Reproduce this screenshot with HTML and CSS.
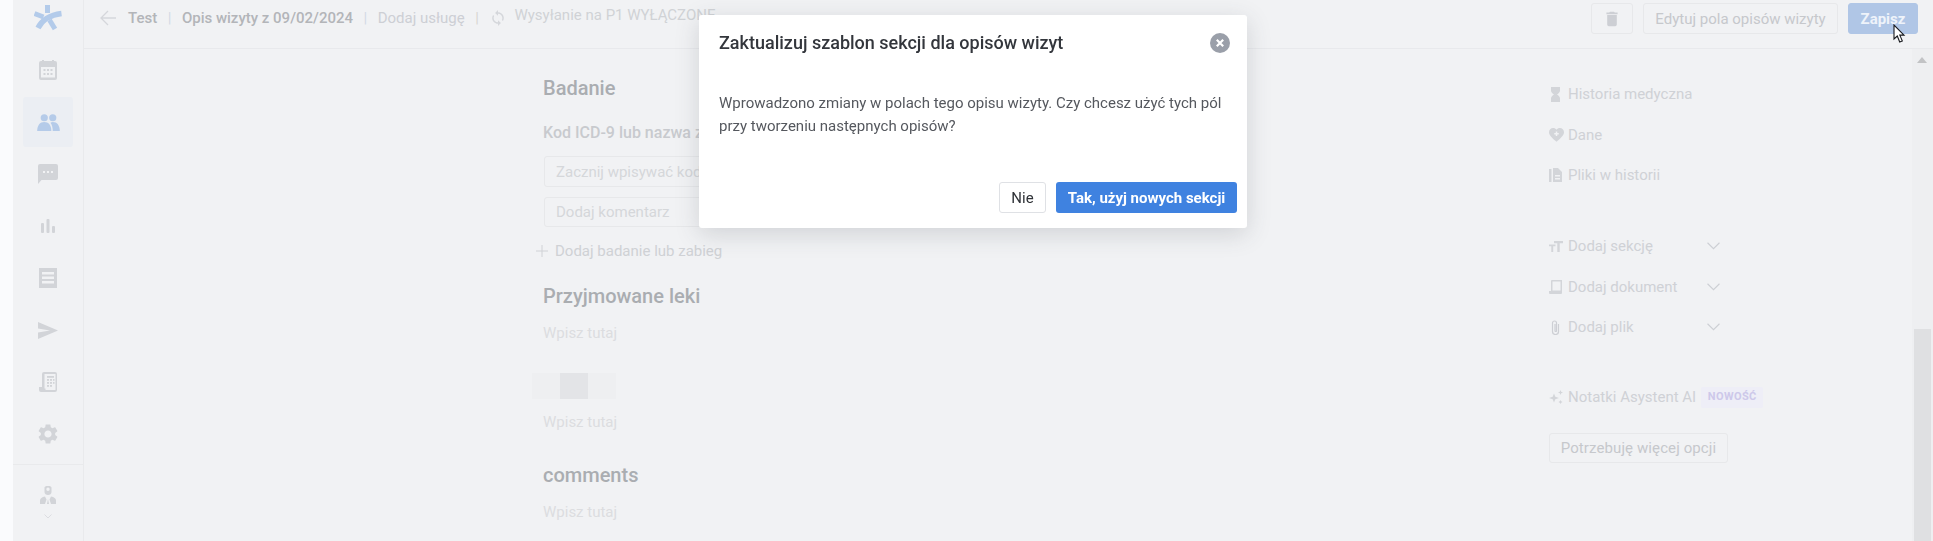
FILE: index.html
```html
<!DOCTYPE html>
<html lang="pl">
<head>
<meta charset="utf-8">
<title>Opis wizyty</title>
<link rel="stylesheet" href="styles.css">
</head>
<body>
<div class="app">
  <div class="strip"></div>
  <aside class="sidebar">
    <div class="logo">
      <svg width="28" height="26" viewBox="0 0 28 26"><g fill="none" stroke="#b3cbea"><path d="M13.500 0v8" stroke-width="5"/><path d="M.5 8.500l9 3.500" stroke-width="5"/><path d="M4 23C8 15 16 10 27.500 8.500" stroke-width="5.500"/><path d="M15.500 15l5.500 9" stroke-width="5"/></g></svg>
    </div>
    <nav class="nav">
      <div class="nav-item"><svg width="20" height="20" viewBox="0 0 20 20"><path class="ic" fill-rule="evenodd" d="M3 1h1V0h2v1h8V0h2v1h1a2 2 0 0 1 2 2v15a2 2 0 0 1-2 2H3a2 2 0 0 1-2-2V3a2 2 0 0 1 2-2zM3 7v10.500h14V7z"/><g class="ic"><rect x="5.500" y="9" width="2" height="2"/><rect x="9" y="9" width="2" height="2"/><rect x="12.500" y="9" width="2" height="2"/><rect x="5.500" y="13" width="2" height="2"/><rect x="9" y="13" width="2" height="2"/><rect x="12.500" y="13" width="2" height="2"/></g></svg></div>
      <div class="nav-item active"><svg width="23" height="17" viewBox="0 0 24 18"><g fill="#b5cbe9"><circle cx="7.500" cy="4" r="3.800"/><circle cx="16.500" cy="4" r="3.800"/><path d="M0 18c0-6 3-9.500 7.500-9.500S15 12 15 18z"/><path d="M16.500 18c0-3.500-.7-6.700-2.400-8.800.7-.4 1.500-.7 2.400-.7 4.500 0 7.500 3.500 7.500 9.500z"/></g></svg></div>
      <div class="nav-item"><svg width="20" height="20" viewBox="0 0 20 20"><path class="ic" d="M2 0h16a2 2 0 0 1 2 2v12a2 2 0 0 1-2 2H3.500L0 20V2a2 2 0 0 1 2-2z"/><g fill="#f1f2f4"><rect x="5" y="7" width="2" height="2"/><rect x="9" y="7" width="2" height="2"/><rect x="13" y="7" width="2" height="2"/></g></svg></div>
      <div class="nav-item"><svg width="14" height="14" viewBox="0 0 14 14"><g class="ic"><rect y="4" width="3" height="10" rx="1"/><rect x="5.500" width="3" height="14" rx="1"/><rect x="11" y="7" width="3" height="7" rx="1"/></g></svg></div>
      <div class="nav-item"><svg width="18" height="20" viewBox="0 0 18 20"><path class="ic" d="M0 0h18v20H0z"/><g fill="#f1f2f4"><rect x="3" y="4" width="12" height="2.500"/><rect x="3" y="8.500" width="12" height="2.500"/><rect x="3" y="13" width="12" height="2.500"/></g></svg></div>
      <div class="nav-item"><svg width="20" height="17" viewBox="0 0 20 17"><path class="ic" d="M0 0l20 8.500L0 17v-6.500l12-2L0 6.500z"/></svg></div>
      <div class="nav-item"><svg width="18" height="20" viewBox="0 0 18 20"><path class="ic" fill-rule="evenodd" d="M5 0h11a2 2 0 0 1 2 2v16a2 2 0 0 1-2 2H2a2 2 0 0 1-2-2v-3h3V2a2 2 0 0 1 2-2zM5.500 2v14.500h1v1.500h9.500a.500.500 0 0 0 .500-.500V2z"/><g class="ic"><rect x="8" y="4" width="7" height="1.800"/><rect x="8" y="7" width="2" height="1.800"/><rect x="11" y="7" width="2" height="1.800"/><rect x="14" y="7" width="1.500" height="1.800"/><rect x="8" y="10" width="2" height="1.800"/><rect x="11" y="10" width="2" height="1.800"/><rect x="14" y="10" width="1.500" height="1.800"/><rect x="8" y="13" width="2" height="1.800"/><rect x="11" y="13" width="2" height="1.800"/></g></svg></div>
      <div class="nav-item"><svg width="24" height="24" viewBox="0 0 24 24"><path class="ic" d="M19.140 12.940c.04-.3.06-.61.06-.94 0-.32-.02-.64-.07-.94l2.030-1.580c.18-.14.23-.41.12-.61l-1.920-3.320c-.12-.22-.37-.29-.59-.22l-2.390.96c-.5-.38-1.030-.7-1.620-.94l-.36-2.540c-.04-.24-.24-.41-.48-.41h-3.840c-.24 0-.43.17-.47.41l-.36 2.540c-.59.24-1.130.57-1.620.94l-2.390-.96c-.22-.08-.47 0-.59.22L2.740 8.870c-.12.21-.08.47.12.61l2.030 1.580c-.05.3-.09.63-.09.94s.02.64.07.94l-2.030 1.580c-.18.14-.23.41-.12.61l1.920 3.320c.12.22.37.29.59.22l2.390-.96c.5.38 1.030.7 1.620.94l.36 2.540c.05.24.24.41.48.41h3.840c.24 0 .44-.17.47-.41l.36-2.540c.59-.24 1.130-.56 1.620-.94l2.390.96c.22.08.47 0 .59-.22l1.920-3.320c.12-.22.07-.47-.12-.61l-2.010-1.580zM12 15.600c-1.980 0-3.600-1.620-3.600-3.600s1.620-3.600 3.600-3.600 3.600 1.620 3.600 3.600-1.620 3.600-3.600 3.600z"/></svg></div>
    </nav>
    <div class="user">
      <svg width="16" height="18" viewBox="0 0 16 18"><path class="ic" fill-rule="evenodd" d="M4.500 1.500C4.500.6 5.500 0 8 0s3.500.6 3.500 1.500V6c0 1.800-1.500 3-3.500 3S4.500 7.800 4.500 6zM6.300 3.200a1.700 1.700 0 1 0 3.400 0 1.700 1.700 0 0 0-3.400 0z"/><path class="ic" d="M0 18v-3.500C0 12.500 2 11 5 10.500l1.500 3-1.500 4.500zM16 18v-3.500c0-2-2-3.500-5-4l-1.500 3L11 18zM7 18l1-5 1 5z"/></svg>
      <svg width="8" height="5" viewBox="0 0 8 5"><path d="M.5.500L4 4 7.500.500" fill="none" stroke="#dcdde1" stroke-width="1"/></svg>
    </div>
  </aside>
  <div class="main">
    <header class="topbar">
      <svg class="back" width="16" height="16" viewBox="0 0 16 16"><path d="M8 1L1 8l7 7M1 8h15" fill="none" stroke="#d5d7db" stroke-width="1.300"/></svg>
      <span class="crumb strong">Test</span>
      <span class="sep">|</span>
      <span class="crumb strong">Opis wizyty z 09/02/2024</span>
      <span class="sep">|</span>
      <span class="crumb">Dodaj usługę</span>
      <span class="sep tan">|</span>
      <svg class="sync" width="14" height="16" viewBox="4 1 16 22"><path fill="#d5d7db" d="M12 4V1L8 5l4 4V6c3.310 0 6 2.690 6 6 0 1.010-.25 1.970-.7 2.800l1.460 1.460C19.540 15.030 20 13.570 20 12c0-4.420-3.580-8-8-8zm0 14c-3.310 0-6-2.690-6-6 0-1.010.25-1.970.7-2.800L5.240 7.740C4.460 8.970 4 10.430 4 12c0 4.420 3.580 8 8 8v3l4-4-4-4v3z"/></svg>
      <span class="crumb raised">Wysyłanie na P1 WYŁĄCZONE</span>
      <div class="actions">
        <button class="btn icon-btn"><svg width="16" height="16" viewBox="3 2 18 20"><path fill="#cdcfd4" d="M6 19c0 1.100.9 2 2 2h8c1.100 0 2-.9 2-2V7H6v12zM19 4h-3.500l-1-1h-5l-1 1H5v2h14V4z"/></svg></button>
        <button class="btn edit-btn">Edytuj pola opisów wizyty</button>
        <button class="btn save-btn">Zapisz</button>
      </div>
    </header>
    <div class="body">
      <section class="content">
        <h2 class="title first">Badanie</h2>
        <div class="label">Kod ICD-9 lub nazwa zabiegu</div>
        <div class="input one">Zacznij wpisywać kod</div>
        <div class="input two">Dodaj komentarz</div>
        <div class="add"><svg width="12" height="12" viewBox="0 0 12 12"><path d="M6 0v12M0 6h12" stroke="#d0d2d6" stroke-width="1"/></svg>Dodaj badanie lub zabieg</div>
        <h2 class="title after-add">Przyjmowane leki</h2>
        <div class="hint">Wpisz tutaj</div>
        <div class="blocks"><i class="cell"></i><i class="cell dark"></i><i class="cell"></i></div>
        <div class="hint tight">Wpisz tutaj</div>
        <h2 class="title after-hint">comments</h2>
        <div class="hint">Wpisz tutaj</div>
      </section>
      <aside class="side">
        <div class="row"><i class="ico"><svg width="13" height="15" viewBox="5 2 14 20"><path class="sic" d="M6 2v5c0 2 2 3.500 4 5-2 1.500-4 3-4 5v5h12v-5c0-2-2-3.500-4-5 2-1.500 4-3 4-5V2z"/></svg></i><span>Historia medyczna</span></div>
        <div class="row"><i class="ico"><svg width="15" height="14" viewBox="2 3 20 18.500"><path class="sic" d="M12 21.350l-1.450-1.320C5.400 15.360 2 12.280 2 8.500 2 5.420 4.420 3 7.500 3c1.740 0 3.410.81 4.500 2.090C13.090 3.810 14.760 3 16.500 3 19.580 3 22 5.420 22 8.500c0 3.780-3.400 6.860-8.550 11.540z"/><path d="M12 7.500v6M9 10.500h6" stroke="#f1f2f4" stroke-width="2"/></svg></i><span>Dane</span></div>
        <div class="row"><i class="ico"><svg width="13" height="14" viewBox="0 0 13 14"><path class="sic" fill-rule="evenodd" d="M4 0h5l4 4v10H4zM6 7v1.500h5V7zM6 10v1.500h5V10z"/><rect class="sic" x="0" y="1" width="2.500" height="13"/></svg></i><span>Pliki w historii</span></div>
        <div class="row wide gap-top"><i class="ico"><svg width="14" height="11" viewBox="0 0 14 11"><path class="sic" d="M5 0h9v2.200h-3.300V11H8.300V2.200H5zM0 3.500h6.500v1.800H4.200V11H2.300V5.300H0z"/></svg></i><span>Dodaj sekcję</span><svg class="chev" width="13" height="8" viewBox="0 0 12 7"><path d="M.5.500L6 6 11.500.500" fill="none" stroke="#cdcfd4" stroke-width="1"/></svg></div>
        <div class="row wide"><i class="ico"><svg width="13" height="14" viewBox="0 0 13 14"><path class="sic" fill-rule="evenodd" d="M3 0h10v13a1 1 0 0 1-1 1H1a1 1 0 0 1-1-1v-2h2V1a1 1 0 0 1 1-1zM3.500 1.500V10.500h8v-9z"/></svg></i><span>Dodaj dokument</span><svg class="chev" width="13" height="8" viewBox="0 0 12 7"><path d="M.5.500L6 6 11.500.500" fill="none" stroke="#cdcfd4" stroke-width="1"/></svg></div>
        <div class="row wide"><i class="ico"><svg width="13" height="15" viewBox="0 0 13 15"><path d="M9.500 4v7.500a3 3 0 0 1-6 0V3a2 2 0 0 1 4 0v8a.8.800 0 0 1-1.500 0V4" fill="none" stroke="#cdcfd4" stroke-width="1.200"/></svg></i><span>Dodaj plik</span><svg class="chev" width="13" height="8" viewBox="0 0 12 7"><path d="M.5.500L6 6 11.500.500" fill="none" stroke="#cdcfd4" stroke-width="1"/></svg></div>
        <div class="row ai"><i class="ico"><svg width="14" height="14" viewBox="0 0 14 14"><path class="sic" d="M5 3.500l1.300 3.200L10 8l-3.700 1.300L5 12.500 3.700 9.300 0 8l3.700-1.300zM11.500 0l.7 1.800L14 2.500l-1.800.7-.7 1.800-.7-1.800L9 2.500l1.800-.7zM11.500 10l.7 1.300 1.300.7-1.300.7-.7 1.300-.7-1.300-1.300-.7 1.300-.7z"/></svg></i><span>Notatki Asystent AI</span><b class="badge">NOWOŚĆ</b></div>
        <button class="btn more-btn">Potrzebuję więcej opcji</button>
      </aside>
      <div class="scrollbar">
        <div class="arrow"></div>
        <div class="thumb"></div>
      </div>
    </div>
  </div>
</div>
<div class="modal">
  <div class="modal-head">
    <h3 class="modal-title">Zaktualizuj szablon sekcji dla opisów wizyt</h3>
    <svg class="close" width="20" height="20" viewBox="0 0 20 20"><circle cx="10" cy="10" r="10" fill="#9a9fa9"/><path d="M6.800 6.800l6.400 6.400M13.200 6.800l-6.400 6.400" stroke="#fff" stroke-width="2.200"/></svg>
  </div>
  <p class="modal-text">Wprowadzono zmiany w polach tego opisu wizyty. Czy chcesz użyć tych pól przy tworzeniu następnych opisów?</p>
  <div class="modal-foot">
    <button class="mbtn no">Nie</button>
    <button class="mbtn yes">Tak, użyj nowych sekcji</button>
  </div>
</div>
<svg class="cursor" width="14" height="20" viewBox="0 0 14 20"><path d="M1 1v14l3.300-3 2.400 6 2.600-1.100-2.500-5.800H11z" fill="#fff" stroke="#16181d" stroke-width="1.100"/></svg>
</body>
</html>
```

FILE: styles.css
```css
* { box-sizing: border-box; }
html, body { margin: 0; height: 100%; overflow: hidden; }
body { font-family: Roboto, "Liberation Sans", sans-serif; background: #f1f2f4; color: #cdcfd4; font-size: 15px; }
svg { display: block; flex: none; }
button { font-family: inherit; }
.ic { fill: #d2d4d8; }
.sic { fill: #d3d5d9; }

.app { display: flex; height: 541px; }
.strip { width: 13px; background: #fafbfd; flex: none; }
.sidebar { width: 71px; flex: none; border-right: 1px solid #e9eaec; display: flex; flex-direction: column; }
.logo { height: 44px; display: flex; justify-content: center; padding-top: 5px; }
.nav { display: flex; flex-direction: column; }
.nav-item { height: 52px; display: flex; align-items: center; justify-content: center; }
.nav-item.active { height: 50px; margin: 1px 10px; background: #ebeef3; border-radius: 3px; }
.user { margin-top: 4px; border-top: 1px solid #e9eaec; padding-top: 21px; display: flex; flex-direction: column; align-items: center; gap: 10px; }

.main { flex: 1; min-width: 0; display: flex; flex-direction: column; }
.topbar { height: 49px; flex: none; border-bottom: 1px solid #e8e9ec; display: flex; align-items: flex-start; padding: 3px 15px 0 16px; }
.back { margin-top: 7px; margin-right: 12px; }
.crumb { line-height: 31px; font-size: 15px; color: #cdcfd4; }
.crumb.strong { font-weight: 500; color: #b3b5b9; }
.crumb.raised { position: relative; top: -3px; color: #d0d2d6; }
.sep { line-height: 31px; color: #d3dae4; margin: 0 10.500px; font-size: 15px; }
.sep.tan { color: #d8d6d2; }
.sync { margin: 7px 9px 0 2px; }
.actions { margin-left: auto; display: flex; gap: 10px; }
.btn { height: 31px; background: transparent; border: 1px solid #e7e8ea; border-radius: 3px; padding: 0; color: #c6c8cc; font-size: 15px; display: flex; align-items: center; justify-content: center; }
.icon-btn { width: 42px; }
.edit-btn { width: 195px; }
.save-btn { width: 70px; background: #b0c6e6; border-color: #b0c6e6; color: #eef3fa; font-weight: 700; }

.body { flex: 1; min-height: 0; display: flex; }
.content { flex: 1; min-width: 0; padding: 27px 0 0 459px; }
.title { margin: 0; font-size: 20px; line-height: 24px; font-weight: 500; color: #aaadb1; }
.label { margin-top: 23px; font-size: 16px; line-height: 20px; font-weight: 500; color: #c8cace; }
.input { width: 600px; margin-left: 1px; border: 1px solid #e7e8ea; border-radius: 3px; padding-left: 11px; color: #d5d7da; font-size: 15px; display: flex; align-items: center; }
.input.one { margin-top: 13px; height: 31px; }
.input.two { margin-top: 10px; height: 30px; }
.add { margin: 14px 0 0 -7px; line-height: 20px; display: flex; align-items: center; gap: 7px; color: #cfd1d5; font-size: 15px; }
.title.after-add { margin-top: 23px; }
.hint { margin-top: 15px; line-height: 20px; font-size: 15px; color: #dcdde0; }
.hint.tight { margin-top: 13px; }
.blocks { display: flex; margin: 30px 0 0 -11px; }
.cell { width: 28px; height: 26px; background: #eeeff1; }
.cell.dark { background: #e3e4e7; }
.title.after-hint { margin-top: 31px; }

.side { width: 363px; flex: none; padding-top: 35px; }
.row { height: 20px; width: 171px; margin-bottom: 20.500px; display: flex; align-items: center; font-size: 15px; color: #cfd1d6; white-space: nowrap; }
.ico { width: 19px; flex: none; display: flex; align-items: center; }
.chev { margin-left: auto; }
.gap-top { margin-top: 51px; }
.ai { margin-top: 50px; margin-bottom: 26px; width: auto; }
.badge { margin-left: 5px; width: 62px; height: 21px; background: #eeeef7; color: #cdc8ea; font-size: 11px; line-height: 20px; letter-spacing: .4px; font-weight: 700; text-align: center; border-radius: 2px; }
.more-btn { width: 179px; height: 30px; letter-spacing: .1px; }

.scrollbar { width: 21px; flex: none; background: #eeeff1; padding-left: 2px; display: flex; flex-direction: column; }
.arrow { width: 0; height: 0; margin: 8px 0 0 3px; border: 5px solid transparent; border-top: 0; border-bottom: 6px solid #c2c3c5; }
.thumb { width: 17px; height: 212px; margin-top: 266px; background: #dfe0e2; }

.modal { position: fixed; left: 699px; top: 15px; width: 548px; height: 213px; background: #fff; border-radius: 3px; box-shadow: 0 6px 24px rgba(60, 66, 80, .18); padding: 20px; display: flex; flex-direction: column; }
.modal-head { display: flex; justify-content: space-between; align-items: flex-start; margin-right: -3px; margin-top: -7px; }
.modal-title { margin: 0; font-size: 18px; line-height: 30px; font-weight: 500; color: #33363c; }
.close { margin-top: 5px; }
.modal-text { margin: 34px 0 0; font-size: 15px; line-height: 23px; color: #55585e; }
.modal-foot { margin-top: auto; display: flex; justify-content: flex-end; gap: 10px; margin-right: -10px; margin-bottom: -5px; }
.mbtn { height: 31px; border-radius: 3px; font-size: 15px; padding: 0; }
.no { width: 47px; background: #fff; border: 1px solid #dfe1e5; color: #2f3237; }
.yes { width: 181px; background: #3f82e0; border: 0; color: #fff; font-weight: 700; }
.cursor { position: fixed; left: 1893px; top: 24px; }
```
